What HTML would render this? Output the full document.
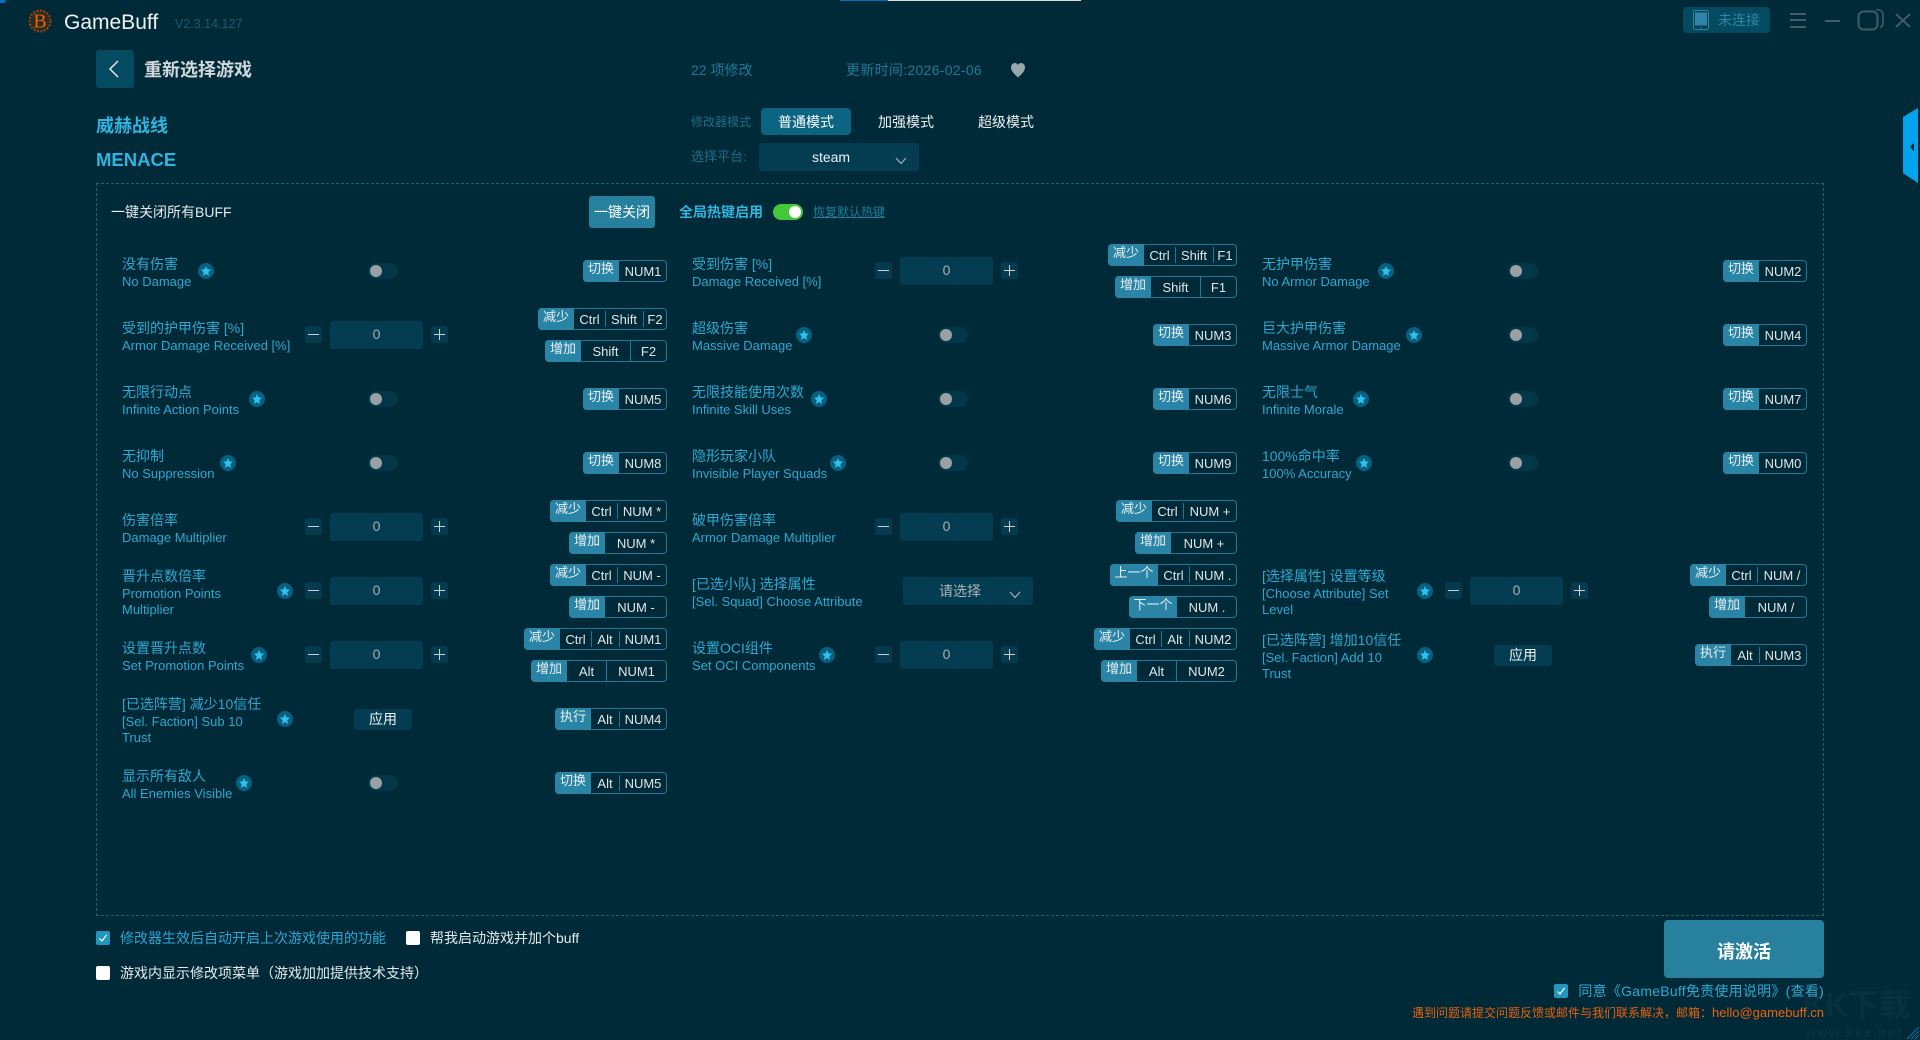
<!DOCTYPE html>
<html lang="zh-CN">
<head>
<meta charset="utf-8">
<title>GameBuff</title>
<style>
*{box-sizing:border-box}
html,body{margin:0;padding:0;width:1920px;height:1040px;overflow:hidden}
body{background:#012a38;position:relative;font-family:"Liberation Sans","Noto Sans CJK SC",sans-serif;color:#e6eaec}
.a{position:absolute;white-space:nowrap}
.r{position:absolute;width:545px;height:0}
.c1{left:122px}.c2{left:692px}.c3{left:1262px}
.t{position:absolute;left:0;top:-16px;white-space:nowrap;color:#2ea8d0}
.t3{top:-24px}
.t b{display:block;font-weight:400;font-size:14px;line-height:19px}
.t i{display:block;font-style:normal;font-size:13px;line-height:16px}
.st{position:absolute;top:-8px;width:16px;height:16px;border-radius:50%;background:#07607f}
.st::after{content:"";position:absolute;left:3px;top:3px;width:10px;height:10px;background:#2fc0f0;clip-path:polygon(50% 0,64% 33%,100% 38%,73% 61%,81% 100%,50% 80%,19% 100%,27% 61%,0 38%,36% 33%)}
.g{position:absolute;left:246px;top:-8px;width:30px;height:16px;border-radius:8px;background:#03384a}
.g::after{content:"";position:absolute;left:2px;top:2px;width:12px;height:12px;border-radius:50%;background:#9aa0a5}
.m,.p{position:absolute;top:-9px;width:17px;height:17px;border-radius:3px;background:#063a4e}
.m{left:183px}.p{left:309px}
.m::before,.p::before{content:"";position:absolute;left:3px;top:8px;width:11px;height:1.2px;background:#c8d2d6}
.p::after{content:"";position:absolute;left:8px;top:3px;width:1.2px;height:11px;background:#c8d2d6}
.i{position:absolute;left:208px;top:-14px;width:93px;height:28px;border-radius:3px;background:#043c52;color:#a5b0b5;font-size:14px;line-height:27px;text-align:center}
.ap{position:absolute;left:232px;top:-10px;width:58px;height:21px;border-radius:3px;background:#043c52;color:#eef2f3;font-size:14px;line-height:21px;text-align:center}
.k{position:absolute;right:0;top:-11px;height:22px;display:flex;border:1px solid #1f7896;border-radius:4px;font-size:13px;line-height:21px;color:#e0e6e8}
.u{top:-27px}.d{top:5px}
.l{margin:-1px 0 -1px -1px;height:22px;background:#2a84a6;border-radius:4px 0 0 4px;color:#e8f0f3;font-size:13px;line-height:18px;text-align:center;flex:none;width:36px}
.l3{width:48px}
.s{position:relative;text-align:center;flex:none;white-space:pre}
.s:last-child{margin-right:-1px}
.s+.s::before{content:"";position:absolute;left:0;top:2px;bottom:2px;width:1px;background:#1f7896}
.f .s+.s::before{top:-1px;bottom:-1px}
.cb{position:absolute;width:14px;height:14px;border-radius:2px;background:#fff}
.cb.on{background:#2296bd}
</style>
</head>
<body>
<!-- top strip -->
<div class="a" style="left:840px;top:0;width:48px;height:1px;background:#0a6cc0"></div>
<div class="a" style="left:888px;top:0;width:193px;height:1px;background:#dddddd"></div>
<div class="a" style="left:0;top:0;width:6px;height:3px;background:#0a6cc0;border-radius:0 0 6px 0"></div>

<!-- logo -->
<svg class="a" style="left:26px;top:7px" width="28" height="28" viewBox="0 0 28 28">
<circle cx="14" cy="14" r="10.5" fill="#2c2a22" stroke="#9c470c" stroke-width="2" stroke-dasharray="2 1.5"/>
<text x="14" y="20.5" text-anchor="middle" font-family="Liberation Serif" font-weight="400" font-size="20" fill="#e8640a">B</text>
</svg>
<div class="a" style="left:64px;top:9px;font-size:21px;line-height:27px;color:#eef2f3">GameBuff</div>
<div class="a" style="left:175px;top:16px;font-size:12.5px;line-height:17px;color:#1f5a70">V2.3.14.127</div>

<!-- back -->
<div class="a" style="left:96px;top:50px;width:38px;height:38px;border-radius:3px;background:#044a60"></div>
<svg class="a" style="left:107px;top:59px" width="14" height="20" viewBox="0 0 14 20"><polyline points="11,2 3,10 11,18" fill="none" stroke="#e3e9eb" stroke-width="1.5"/></svg>
<div class="a" style="left:144px;top:58px;font-size:18px;line-height:24px;font-weight:700;color:#cfd8db">重新选择游戏</div>
<div class="a" style="left:96px;top:114px;font-size:18px;line-height:24px;font-weight:700;color:#2fb5e0">威赫战线</div>
<div class="a" style="left:96px;top:148px;font-size:18.5px;line-height:24px;font-weight:700;color:#2fb5e0">MENACE</div>

<!-- header info -->
<div class="a" style="left:691px;top:60px;font-size:14px;line-height:20px;color:#1e7a98">22 项修改</div>
<div class="a" style="left:846px;top:60px;font-size:14px;line-height:20px;letter-spacing:.3px;color:#1e7a98">更新时间:2026-02-06</div>
<svg class="a" style="left:1010px;top:62px" width="16" height="16" viewBox="0 0 16 16"><path d="M8 15.5C5 12.5 1 9.5 1 5.2 1 2.8 2.8 1 4.8 1 6.2 1 7.4 1.800 8 3 8.600 1.800 9.800 1 11.200 1 13.200 1 15 2.800 15 5.200 15 9.500 11 12.500 8 15.500Z" fill="#9aa8ae"/></svg>
<div class="a" style="left:691px;top:114px;font-size:12px;line-height:17px;color:#1e6f8a">修改器模式</div>
<div class="a" style="left:761px;top:108px;width:90px;height:27px;border-radius:4px;background:#0a6482;color:#fff;font-size:14px;line-height:29px;text-align:center">普通模式</div>
<div class="a" style="left:878px;top:108px;color:#eef2f3;font-size:14px;line-height:29px">加强模式</div>
<div class="a" style="left:978px;top:108px;color:#eef2f3;font-size:14px;line-height:29px">超级模式</div>
<div class="a" style="left:691px;top:148px;font-size:13px;line-height:18px;color:#1e6f8a">选择平台:</div>
<div class="a" style="left:759px;top:143px;width:160px;height:28px;border-radius:3px;background:#043c52"></div>
<div class="a" style="left:811px;top:147px;width:40px;text-align:center;font-size:14px;line-height:20px;color:#eef2f3">steam</div>
<svg class="a" style="left:895px;top:157px" width="12" height="8" viewBox="0 0 12 8"><polyline points="1,1 6,6.500 11,1" fill="none" stroke="#9fb0b6" stroke-width="1.200"/></svg>

<!-- top right -->
<div class="a" style="left:1683px;top:7px;width:87px;height:26px;border-radius:4px;background:#044a60"></div>
<svg class="a" style="left:1693px;top:10px" width="16" height="20" viewBox="0 0 16 20"><rect x=".5" y=".5" width="15" height="19" rx="2" fill="#0b3f55" stroke="#2f85a8"/><rect x="2" y="2.500" width="12" height="13" fill="#2f85a8"/><circle cx="8" cy="17.500" r=".8" fill="#2f85a8"/></svg>
<div class="a" style="left:1718px;top:10px;font-size:14px;line-height:20px;color:#2f87a7">未连接</div>
<div class="a" style="left:1790px;top:13px;width:16px;height:2px;background:#3f5c68"></div>
<div class="a" style="left:1790px;top:19px;width:16px;height:2px;background:#3f5c68"></div>
<div class="a" style="left:1790px;top:26px;width:16px;height:2px;background:#3f5c68"></div>
<div class="a" style="left:1825px;top:20px;width:15px;height:2px;background:#3f5c68"></div>
<svg class="a" style="left:1857px;top:8px" width="28" height="23" viewBox="0 0 28 23"><path d="M19 2H21C25 2 26 4 26 7V14C26 17 25 19 23 19.500" fill="none" stroke="#3f5c68" stroke-width="1.600"/><rect x="1.500" y="3.500" width="19" height="18" rx="5" fill="none" stroke="#3f5c68" stroke-width="2"/></svg>
<svg class="a" style="left:1895px;top:13px" width="16" height="15" viewBox="0 0 16 15"><path d="M1 1L15 14M15 1L1 14" fill="none" stroke="#3f5c68" stroke-width="2"/></svg>

<!-- right tab -->
<svg class="a" style="left:1903px;top:108px" width="15" height="75" viewBox="0 0 15 75"><polygon points="0,9 15,0 15,75 0,65" fill="#00a4ec"/><polygon points="7,39 11,35 11,43" fill="#02141c"/></svg>

<!-- panel -->
<div class="a" style="left:96px;top:183px;width:1728px;height:733px;border:1px dashed #1d6478"></div>
<div class="a" style="left:111px;top:202px;font-size:14px;line-height:20px;color:#e6eaec">一键关闭所有BUFF</div>
<div class="a" style="left:589px;top:196px;width:66px;height:32px;border-radius:3px;background:#27809e;color:#fff;font-size:14px;line-height:32px;text-align:center">一键关闭</div>
<div class="a" style="left:679px;top:202px;font-size:14px;line-height:20px;font-weight:700;color:#2fb5e0">全局热键启用</div>
<div class="a" style="left:773px;top:204px;width:30px;height:16px;border-radius:8px;background:#43c838"></div>
<div class="a" style="left:789px;top:206px;width:12px;height:12px;border-radius:50%;background:#fff"></div>
<div class="a" style="left:813px;top:203px;font-size:12px;line-height:18px;color:#1f7c9c;text-decoration:underline">恢复默认热键</div>

<!-- rows -->
<div class="r c1" style="top:271px"><div class="t"><b>没有伤害</b><i>No Damage</i></div><span class="st" style="left:76px"></span><span class="g"></span><div class="k"><span class="l">切换</span><span class="s" style="width:48px">NUM1</span></div></div>
<div class="r c2" style="top:271px"><div class="t"><b>受到伤害 [%]</b><i>Damage Received [%]</i></div><span class="m"></span><span class="i">0</span><span class="p"></span><div class="k u"><span class="l">减少</span><span class="s" style="width:31px">Ctrl</span><span class="s" style="width:38px">Shift</span><span class="s" style="width:24px">F1</span></div><div class="k d f"><span class="l">增加</span><span class="s" style="width:49px">Shift</span><span class="s" style="width:37px">F1</span></div></div>
<div class="r c3" style="top:271px"><div class="t"><b>无护甲伤害</b><i>No Armor Damage</i></div><span class="st" style="left:116px"></span><span class="g"></span><div class="k"><span class="l">切换</span><span class="s" style="width:48px">NUM2</span></div></div>

<div class="r c1" style="top:335px"><div class="t"><b>受到的护甲伤害 [%]</b><i>Armor Damage Received [%]</i></div><span class="m"></span><span class="i">0</span><span class="p"></span><div class="k u"><span class="l">减少</span><span class="s" style="width:31px">Ctrl</span><span class="s" style="width:38px">Shift</span><span class="s" style="width:24px">F2</span></div><div class="k d f"><span class="l">增加</span><span class="s" style="width:49px">Shift</span><span class="s" style="width:37px">F2</span></div></div>
<div class="r c2" style="top:335px"><div class="t"><b>超级伤害</b><i>Massive Damage</i></div><span class="st" style="left:104px"></span><span class="g"></span><div class="k"><span class="l">切换</span><span class="s" style="width:48px">NUM3</span></div></div>
<div class="r c3" style="top:335px"><div class="t"><b>巨大护甲伤害</b><i>Massive Armor Damage</i></div><span class="st" style="left:144px"></span><span class="g"></span><div class="k"><span class="l">切换</span><span class="s" style="width:48px">NUM4</span></div></div>

<div class="r c1" style="top:399px"><div class="t"><b>无限行动点</b><i>Infinite Action Points</i></div><span class="st" style="left:127px"></span><span class="g"></span><div class="k"><span class="l">切换</span><span class="s" style="width:48px">NUM5</span></div></div>
<div class="r c2" style="top:399px"><div class="t"><b>无限技能使用次数</b><i>Infinite Skill Uses</i></div><span class="st" style="left:119px"></span><span class="g"></span><div class="k"><span class="l">切换</span><span class="s" style="width:48px">NUM6</span></div></div>
<div class="r c3" style="top:399px"><div class="t"><b>无限士气</b><i>Infinite Morale</i></div><span class="st" style="left:91px"></span><span class="g"></span><div class="k"><span class="l">切换</span><span class="s" style="width:48px">NUM7</span></div></div>

<div class="r c1" style="top:463px"><div class="t"><b>无抑制</b><i>No Suppression</i></div><span class="st" style="left:98px"></span><span class="g"></span><div class="k"><span class="l">切换</span><span class="s" style="width:48px">NUM8</span></div></div>
<div class="r c2" style="top:463px"><div class="t"><b>隐形玩家小队</b><i>Invisible Player Squads</i></div><span class="st" style="left:138px"></span><span class="g"></span><div class="k"><span class="l">切换</span><span class="s" style="width:48px">NUM9</span></div></div>
<div class="r c3" style="top:463px"><div class="t"><b>100%命中率</b><i>100% Accuracy</i></div><span class="st" style="left:94px"></span><span class="g"></span><div class="k"><span class="l">切换</span><span class="s" style="width:48px">NUM0</span></div></div>

<div class="r c1" style="top:527px"><div class="t"><b>伤害倍率</b><i>Damage Multiplier</i></div><span class="m"></span><span class="i">0</span><span class="p"></span><div class="k u"><span class="l">减少</span><span class="s" style="width:31px">Ctrl</span><span class="s" style="width:50px">NUM *</span></div><div class="k d f"><span class="l">增加</span><span class="s" style="width:62px">NUM *</span></div></div>
<div class="r c2" style="top:527px"><div class="t"><b>破甲伤害倍率</b><i>Armor Damage Multiplier</i></div><span class="m"></span><span class="i">0</span><span class="p"></span><div class="k u"><span class="l">减少</span><span class="s" style="width:31px">Ctrl</span><span class="s" style="width:54px">NUM +</span></div><div class="k d f"><span class="l">增加</span><span class="s" style="width:66px">NUM +</span></div></div>

<div class="r c1" style="top:591px"><div class="t t3"><b>晋升点数倍率</b><i>Promotion Points<br>Multiplier</i></div><span class="st" style="left:155px"></span><span class="m"></span><span class="i">0</span><span class="p"></span><div class="k u"><span class="l">减少</span><span class="s" style="width:31px">Ctrl</span><span class="s" style="width:50px">NUM -</span></div><div class="k d f"><span class="l">增加</span><span class="s" style="width:62px">NUM -</span></div></div>
<div class="r c2" style="top:591px"><div class="t"><b>[已选小队] 选择属性</b><i>[Sel. Squad] Choose Attribute</i></div><div class="a" style="left:211px;top:-14px;width:130px;height:28px;border-radius:3px;background:#043c52"></div><div class="a" style="left:211px;top:-14px;width:114px;text-align:center;font-size:14px;line-height:28px;color:#a8b4b8">请选择</div><svg class="a" style="left:317px;top:0" width="12" height="8" viewBox="0 0 12 8"><polyline points="1,1 6,6.500 11,1" fill="none" stroke="#9fb0b6" stroke-width="1.200"/></svg><div class="k u"><span class="l l3">上一个</span><span class="s" style="width:31px">Ctrl</span><span class="s" style="width:48px">NUM .</span></div><div class="k d f"><span class="l l3">下一个</span><span class="s" style="width:60px">NUM .</span></div></div>
<div class="r c3" style="top:591px"><div class="t t3"><b>[选择属性] 设置等级</b><i>[Choose Attribute] Set<br>Level</i></div><span class="st" style="left:155px"></span><span class="m"></span><span class="i">0</span><span class="p"></span><div class="k u"><span class="l">减少</span><span class="s" style="width:31px">Ctrl</span><span class="s" style="width:50px">NUM /</span></div><div class="k d f"><span class="l">增加</span><span class="s" style="width:62px">NUM /</span></div></div>

<div class="r c1" style="top:655px"><div class="t"><b>设置晋升点数</b><i>Set Promotion Points</i></div><span class="st" style="left:129px"></span><span class="m"></span><span class="i">0</span><span class="p"></span><div class="k u"><span class="l">减少</span><span class="s" style="width:31px">Ctrl</span><span class="s" style="width:28px">Alt</span><span class="s" style="width:48px">NUM1</span></div><div class="k d f"><span class="l">增加</span><span class="s" style="width:39px">Alt</span><span class="s" style="width:61px">NUM1</span></div></div>
<div class="r c2" style="top:655px"><div class="t"><b>设置OCI组件</b><i>Set OCI Components</i></div><span class="st" style="left:127px"></span><span class="m"></span><span class="i">0</span><span class="p"></span><div class="k u"><span class="l">减少</span><span class="s" style="width:31px">Ctrl</span><span class="s" style="width:28px">Alt</span><span class="s" style="width:48px">NUM2</span></div><div class="k d f"><span class="l">增加</span><span class="s" style="width:39px">Alt</span><span class="s" style="width:61px">NUM2</span></div></div>
<div class="r c3" style="top:655px"><div class="t t3"><b>[已选阵营] 增加10信任</b><i>[Sel. Faction] Add 10<br>Trust</i></div><span class="st" style="left:155px"></span><span class="ap">应用</span><div class="k"><span class="l">执行</span><span class="s" style="width:28px">Alt</span><span class="s" style="width:48px">NUM3</span></div></div>

<div class="r c1" style="top:719px"><div class="t t3"><b>[已选阵营] 减少10信任</b><i>[Sel. Faction] Sub 10<br>Trust</i></div><span class="st" style="left:155px"></span><span class="ap">应用</span><div class="k"><span class="l">执行</span><span class="s" style="width:28px">Alt</span><span class="s" style="width:48px">NUM4</span></div></div>

<div class="r c1" style="top:783px"><div class="t"><b>显示所有敌人</b><i>All Enemies Visible</i></div><span class="st" style="left:114px"></span><span class="g"></span><div class="k"><span class="l">切换</span><span class="s" style="width:28px">Alt</span><span class="s" style="width:48px">NUM5</span></div></div>

<!-- watermark -->
<div class="a" style="left:1803px;top:986px;font-size:32px;line-height:38px;font-weight:700;color:#07313f;letter-spacing:-1px">KK下载</div>
<div class="a" style="left:1805px;top:1024px;font-size:13.500px;line-height:18px;font-weight:700;letter-spacing:1.500px;color:#0a3341">www.kkx.net</div>
<svg class="a" style="left:1906px;top:1026px" width="14" height="14" viewBox="0 0 14 14"><path d="M1 13L13 1M5 13L13 5M9 13L13 9" fill="none" stroke="#1a6aa0" stroke-width="1"/></svg>

<!-- bottom options -->
<div class="cb on" style="left:96px;top:931px"><svg width="14" height="14" viewBox="0 0 14 14" style="display:block"><polyline points="3.500,7.500 6,10 10.500,4" fill="none" stroke="#fff" stroke-width="1.200"/></svg></div>
<div class="a" style="left:120px;top:928px;font-size:14px;line-height:20px;color:#2aa6d2">修改器生效后自动开启上次游戏使用的功能</div>
<div class="cb" style="left:406px;top:931px"></div>
<div class="a" style="left:430px;top:928px;font-size:14px;line-height:20px;color:#e6eaec">帮我启动游戏并加个buff</div>
<div class="cb" style="left:96px;top:966px"></div>
<div class="a" style="left:120px;top:963px;font-size:14px;line-height:20px;color:#e6eaec">游戏内显示修改项菜单（游戏加加提供技术支持）</div>

<div class="a" style="left:1664px;top:920px;width:160px;height:58px;border-radius:4px;background:#27809e;color:#fff;font-size:18px;font-weight:700;line-height:65px;text-align:center">请激活</div>
<div class="cb on" style="left:1554px;top:984px"><svg width="14" height="14" viewBox="0 0 14 14" style="display:block"><polyline points="3.500,7.500 6,10 10.500,4" fill="none" stroke="#fff" stroke-width="1.200"/></svg></div>
<div class="a" style="right:96px;top:981px;font-size:14px;line-height:20px;letter-spacing:.25px;color:#2ea8d0">同意《GameBuff免责使用说明》(查看)</div>
<div class="a" style="right:96px;top:1004px;font-size:12px;line-height:17px;color:#e8620c">遇到问题请提交问题反馈或邮件与我们联系解决，邮箱：<span style="font-size:13px">hello@gamebuff.cn</span></div>
</body>
</html>
